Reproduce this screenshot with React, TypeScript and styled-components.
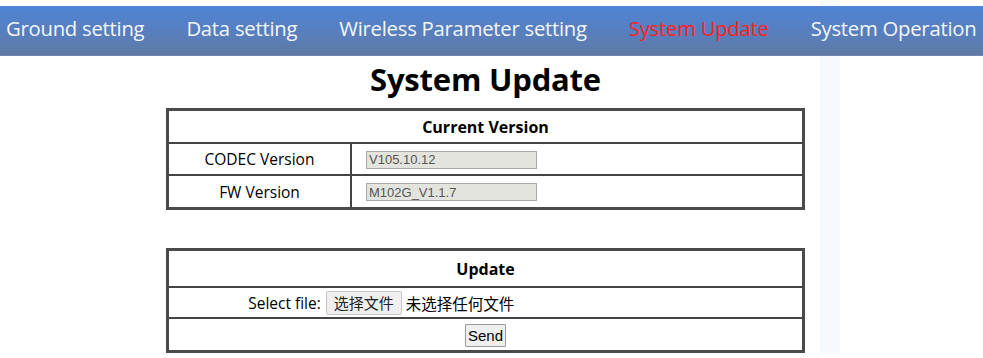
import React from "react";
import styled, { createGlobalStyle } from "styled-components";

const Global = createGlobalStyle`
  html, body { margin: 0; padding: 0; background: #fff; }
  body {
    background: linear-gradient(to right, #fff 0, #fff 820px, #f6f9fd 820px, #f6f9fd 840px, #fff 840px);
    font-family: "Open Sans", "Noto Sans", sans-serif;
    color: #000;
  }
`;

const Page = styled.div`
  padding-top: 6px;
`;

const Nav = styled.nav`
  height: 44px;
  padding: 0 0 5px 6px;
  display: flex;
  align-items: center;
  gap: 42px;
  background: linear-gradient(#4f84d7, #5f7aa7);
  border-bottom: 1px solid #6d86ad;
  white-space: nowrap;
  overflow: hidden;
`;

const NavItem = styled.a<{ $active?: boolean }>`
  font-family: "Open Sans", "Noto Sans", sans-serif;
  font-size: 20.3px;
  color: ${(p) => (p.$active ? "#ff2020" : "#f4f6fa")};
  text-decoration: none;
  letter-spacing: -0.25px;
`;

const Main = styled.main`
  width: 971px;
  display: flex;
  flex-direction: column;
  align-items: center;
`;

const Title = styled.h1`
  margin: 5px 0 10px;
  font-family: "Open Sans", "Noto Sans", sans-serif;
  font-size: 31px;
  font-weight: 700;
  line-height: 37px;
  letter-spacing: -0.2px;
`;

const Table = styled.table<{ $gap?: number }>`
  width: 639px;
  border-collapse: collapse;
  border: 3px solid #4a4a4a;
  margin-bottom: ${(p) => p.$gap ?? 0}px;
  font-family: "Open Sans", "Noto Sans", "Noto Sans CJK SC", sans-serif;
  font-size: 15.5px;
`;

const HeadCell = styled.th<{ $h: number }>`
  height: ${(p) => p.$h}px;
  padding: 0;
  border: 2px solid #444;
  font-weight: 700;
  font-size: 16px;
  text-align: center;
`;

const LabelCell = styled.td<{ $h: number }>`
  width: 181px;
  height: ${(p) => p.$h}px;
  padding: 0;
  border: 2px solid #444;
  text-align: center;
`;

const ValueCell = styled.td`
  padding: 0 0 2px 14px;
  border: 2px solid #444;
`;

const FullCell = styled.td<{ $h: number }>`
  height: ${(p) => p.$h}px;
  padding: 0;
  border: 2px solid #444;
  text-align: center;
`;

const ReadOnly = styled.input`
  box-sizing: border-box;
  width: 171px;
  height: 18px;
  padding: 0 2px;
  border: 1px solid #a9a9a9;
  background: #e4e4de;
  color: #555;
  font-family: "Liberation Sans", Arial, sans-serif;
  font-size: 13px;
  vertical-align: middle;
`;

const FileRow = styled.span`
  display: inline-flex;
  align-items: center;
  gap: 5px;
  vertical-align: middle;
`;

const FilePicker = styled.span`
  width: 397px;
  display: flex;
  align-items: center;
  gap: 4px;
  text-align: left;
`;

const FileButton = styled.button`
  box-sizing: border-box;
  width: 76px;
  height: 24px;
  padding: 0;
  border: 1px solid #c6c6c6;
  border-radius: 2px;
  background: #efefef;
  font-family: "Noto Sans CJK SC", sans-serif;
  font-size: 15px;
  color: #222;
`;

const FileText = styled.span`
  font-family: "Noto Sans CJK SC", sans-serif;
  font-size: 15.5px;
`;

const SendButton = styled.button`
  box-sizing: border-box;
  width: 41px;
  height: 23px;
  padding: 0;
  border: 1px solid #9a9a9a;
  border-radius: 1px;
  background: #efefef;
  font-family: "Liberation Sans", Arial, sans-serif;
  font-size: 15px;
  color: #000;
  vertical-align: middle;
`;

export default function App() {
  return (
    <Page>
      <Global />
      <Nav>
        <NavItem>Ground setting</NavItem>
        <NavItem>Data setting</NavItem>
        <NavItem>Wireless Parameter setting</NavItem>
        <NavItem $active>System Update</NavItem>
        <NavItem>System Operation</NavItem>
      </Nav>
      <Main>
        <Title>System Update</Title>
        <Table $gap={38}>
          <tbody>
            <tr>
              <HeadCell colSpan={2} $h={31}>Current Version</HeadCell>
            </tr>
            <tr>
              <LabelCell $h={30}>CODEC Version</LabelCell>
              <ValueCell>
                <ReadOnly readOnly value="V105.10.12" />
              </ValueCell>
            </tr>
            <tr>
              <LabelCell $h={31}>FW Version</LabelCell>
              <ValueCell>
                <ReadOnly readOnly value="M102G_V1.1.7" />
              </ValueCell>
            </tr>
          </tbody>
        </Table>
        <Table>
          <tbody>
            <tr>
              <HeadCell $h={35}>Update</HeadCell>
            </tr>
            <tr>
              <FullCell $h={29}>
                <FileRow>
                  Select file:
                  <FilePicker>
                    <FileButton>选择文件</FileButton>
                    <FileText>未选择任何文件</FileText>
                  </FilePicker>
                </FileRow>
              </FullCell>
            </tr>
            <tr>
              <FullCell $h={31}>
                <SendButton>Send</SendButton>
              </FullCell>
            </tr>
          </tbody>
        </Table>
      </Main>
    </Page>
  );
}
